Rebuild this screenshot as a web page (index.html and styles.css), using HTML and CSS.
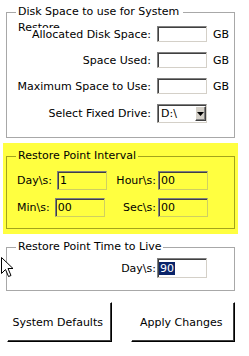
FILE: index.html
```html
<!DOCTYPE html>
<html lang="en">

<head>
    <meta charset="UTF-8">
    <meta name="viewport" content="width=device-width, initial-scale=1.0">
    <title>System Restore Settings</title>
    <link rel="stylesheet" href="styles.css">
</head>

<body>
    <div class="panel">
        <fieldset class="group">
            <legend class="wrap-legend">Disk Space to use for System Restore</legend>
            <div class="space-grid">
                <label class="grid-label">Allocated Disk Space:</label>
                <input type="text" class="field">
                <span class="unit">GB</span>

                <label class="grid-label">Space Used:</label>
                <input type="text" class="field">
                <span class="unit">GB</span>

                <label class="grid-label">Maximum Space to Use:</label>
                <input type="text" class="field">
                <span class="unit">GB</span>

                <label class="grid-label">Select Fixed Drive:</label>
                <div class="combo">
                    <span class="combo-text">D:\</span>
                    <span class="combo-btn">
                        <svg width="7" height="4" viewBox="0 0 7 4"><polygon points="0,0 7,0 3.5,4" fill="#000"/></svg>
                    </span>
                </div>
            </div>
        </fieldset>

        <div class="highlight">
            <fieldset class="group group-yellow">
                <legend>Restore Point Interval</legend>
                <div class="interval-rows">
                    <div class="interval-row">
                        <label>Day\s:</label>
                        <input type="text" class="field field-yellow first" value="1">
                        <label class="right-label">Hour\s:</label>
                        <input type="text" class="field field-yellow" value="00">
                    </div>
                    <div class="interval-row">
                        <label>Min\s:</label>
                        <input type="text" class="field field-yellow first" value="00">
                        <label class="right-label">Sec\s:</label>
                        <input type="text" class="field field-yellow" value="00">
                    </div>
                </div>
            </fieldset>
        </div>

        <fieldset class="group group-ttl">
            <legend>Restore Point Time to Live</legend>
            <div class="ttl-row">
                <label>Day\s:</label>
                <span class="field field-ttl"><span class="selected">90</span></span>
            </div>
        </fieldset>

        <div class="buttons">
            <button>System Defaults</button>
            <button>Apply Changes</button>
        </div>
    </div>

    <svg class="cursor" width="13" height="22" viewBox="0 0 13 22">
        <path d="M0.5 0.5 V16.5 L4.5 12.5 L7.5 19.5 L10 18.5 L7 11.5 H12 Z" fill="#fff" stroke="#000" stroke-width="1"/>
    </svg>
</body>

</html>
```

FILE: styles.css
```css
body {
    margin: 0;
    background-color: #fff;
    font-family: "DejaVu Sans", sans-serif;
    font-size: 11px;
    color: #000;
    position: relative;
}

.panel {
    width: 229px;
    padding: 4px 0 0 6px;
}

.group {
    margin: 0;
    padding: 0;
    min-width: 0;
    border: 1px solid #a8a8a8;
}

.group legend {
    margin-left: 9px;
    padding: 0 2px;
    height: 16px;
    line-height: 16px;
    white-space: nowrap;
}

.group .wrap-legend {
    max-width: 163px;
    white-space: normal;
}

.space-grid {
    display: grid;
    grid-template-columns: 1fr 50px 16px;
    column-gap: 6px;
    row-gap: 10px;
    align-items: center;
    padding: 6px 5px 14px 0;
}

.grid-label {
    justify-self: end;
    position: relative;
    line-height: 13px;
    background-color: #fff;
}

.field {
    box-sizing: border-box;
    width: 50px;
    height: 16px;
    margin: 0;
    padding: 0 2px;
    font: inherit;
    color: #000;
    background-color: #fff;
    border: 1px solid;
    border-color: #808080 #d4d0c8 #d4d0c8 #808080;
    box-shadow: inset 1px 1px #404040;
    outline: none;
}

.unit {
    line-height: 13px;
}

.combo {
    box-sizing: border-box;
    display: flex;
    width: 50px;
    height: 19px;
    background-color: #fff;
    border: 1px solid;
    border-color: #808080 #d4d0c8 #d4d0c8 #808080;
    box-shadow: inset 1px 1px #404040;
}

.combo-text {
    flex: 1;
    padding-left: 3px;
    line-height: 17px;
}

.combo-btn {
    box-sizing: border-box;
    display: flex;
    align-items: center;
    justify-content: center;
    width: 11px;
    margin: 1px 0 1px 0;
    background-color: #d4d0c8;
    border: 1px solid;
    border-color: #fff #404040 #404040 #fff;
    box-shadow: inset -1px -1px #808080;
}

.highlight {
    margin: 5px -3px 0;
    padding: 5px 3px 5px;
    background-color: #ffff40;
}

.group-yellow {
    border-color: #a3a31c;
}

.interval-rows {
    display: flex;
    flex-direction: column;
    gap: 8px;
    padding: 7px 26px 11px 10px;
}

.interval-row {
    display: flex;
    align-items: center;
}

.field-yellow {
    height: 19px;
    background-color: #ffff40;
    border-color: #808080 #d0d060 #d0d060 #808080;
}

.field-yellow.first {
    margin-left: 5px;
}

.right-label {
    flex: 1;
    text-align: right;
    margin-right: 2px;
}

.group-ttl {
    margin-top: 5px;
}

.ttl-row {
    display: flex;
    justify-content: flex-end;
    align-items: center;
    padding: 3px 27px 12px 0;
}

.ttl-row label {
    margin-right: 1px;
}

.field-ttl {
    display: flex;
    align-items: center;
    height: 20px;
    padding: 0 0 0 1px;
}

.selected {
    background-color: #0a246a;
    color: #fff;
    line-height: 13px;
    padding: 0 1px;
}

.buttons {
    display: flex;
    gap: 19px;
    margin: 11px 0 0 1px;
}

.buttons button {
    width: 105px;
    height: 40px;
    padding: 0 3px 0 0;
    font: inherit;
    color: #000;
    background-color: #fff;
    border: 1px solid;
    border-color: #fff #000 #000 #fff;
    box-shadow: inset -1px -1px #404040;
}

.cursor {
    position: absolute;
    left: 1px;
    top: 257px;
}
```
